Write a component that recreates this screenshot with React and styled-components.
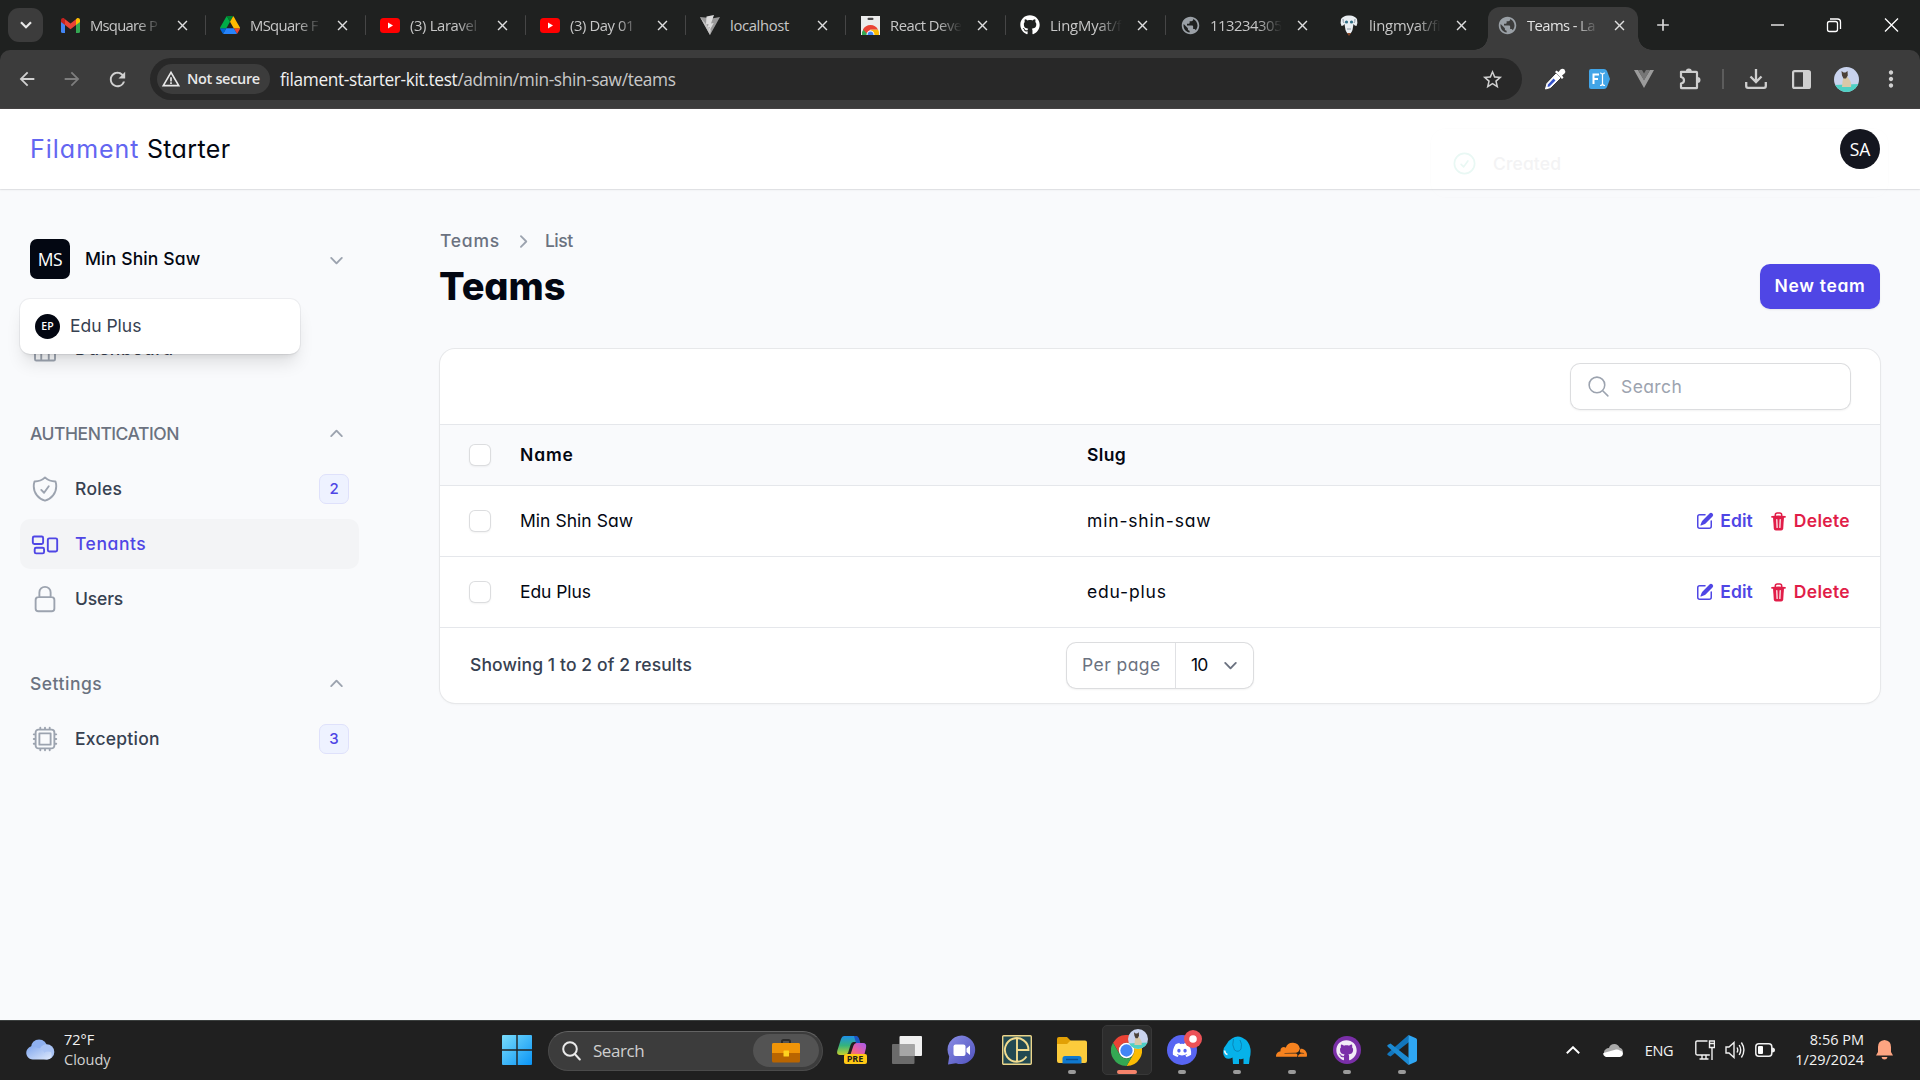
import React from "react";
import styled, { createGlobalStyle, css } from "styled-components";
import {
  HiOutlineShieldCheck,
  HiOutlineRectangleGroup,
  HiOutlineLockClosed,
  HiOutlineCpuChip,
  HiOutlineMagnifyingGlass,
  HiOutlineCheckCircle,
  HiMiniChevronDown,
  HiMiniChevronUp,
  HiMiniChevronRight,
  HiMiniPencilSquare,
} from "react-icons/hi2";
import { FaGithub, FaDiscord, FaCloudflare } from "react-icons/fa6";
import {
  MdArrowBack,
  MdArrowForward,
  MdRefresh,
  MdStarBorder,
  MdWarningAmber,
  MdMoreVert,
  MdAdd,
  MdClose,
  MdPublic,
} from "react-icons/md";

const GlobalStyle = createGlobalStyle`
  *, *::before, *::after { box-sizing: border-box; }
  body { margin: 0; background: #f9fafb; overflow: hidden; }
  svg { display: block; flex: none; }
`;

const systemFont = css`
  font-family: "Open Sans", "Noto Sans", sans-serif;
`;

const appFont = css`
  font-family: "Inter", "Open Sans", sans-serif;
  font-feature-settings: "cv11";
`;

const spaced = css`
  white-space: nowrap;
  letter-spacing: ${(p) => p.$ls || 0}px;
`;

const label = css`
  ${spaced}
  padding-bottom: 2px;
  font-size: 17.5px;
`;

const Screen = styled.div`
  display: flex;
  flex-direction: column;
  width: 1920px;
  height: 1080px;
  overflow: hidden;
`;

/* ---------- browser window ---------- */

const TabStrip = styled.div`
  ${systemFont}
  display: flex;
  align-items: stretch;
  height: 50px;
  flex: none;
  padding-left: 8px;
  background: #1f2120;
`;

const TabSearch = styled.button`
  display: grid;
  place-items: center;
  width: 35px;
  height: 34px;
  margin: 8px 3px 0 0;
  padding: 0;
  border: 0;
  border-radius: 11px;
  background: #3c3c3c;
`;

const Tab = styled.div`
  display: flex;
  align-items: center;
  width: ${(p) => p.$width}px;
  padding: 0 0 0 14px;
`;

const TabIcon = styled.span`
  display: grid;
  place-items: center;
  width: 20px;
  height: 20px;
  margin-right: 10px;
  flex: none;
`;

const TabTitle = styled.span`
  ${spaced}
  width: 72px;
  margin-right: 12px;
  overflow: hidden;
  flex: none;
  font-size: 14.8px;
  line-height: 22px;
  color: ${(p) => (p.$active ? "#e3e3e3" : "#c7c7c7")};
  mask-image: linear-gradient(90deg, #000 66%, transparent 100%);
  ${(p) => p.$solid && "mask-image: none;"}
`;

const TabClose = styled(MdClose)`
  width: 17px;
  height: 17px;
  margin-right: 14px;
  color: #dedede;
`;

const TabDivider = styled.i`
  width: 2px;
  height: 20px;
  border-radius: 1px;
  background: ${(p) => (p.$hidden ? "transparent" : "#464646")};
`;

const ActiveTab = styled.div`
  position: relative;
  display: flex;
  align-items: center;
  width: 150px;
  height: 43px;
  margin: 7px 0 0 4px;
  padding: 0 0 7px 9px;
  border-radius: 12px 12px 0 0;
  background: #3c3c3c;
  &::before,
  &::after {
    content: "";
    position: absolute;
    bottom: 0;
    width: 14px;
    height: 14px;
  }
  &::before {
    left: -14px;
    background: radial-gradient(circle at 0 0, transparent 13.5px, #3c3c3c 14px);
  }
  &::after {
    right: -14px;
    background: radial-gradient(circle at 100% 0, transparent 13.5px, #3c3c3c 14px);
  }
`;

const NewTab = styled(MdAdd)`
  width: 20px;
  height: 20px;
  margin: 15px 0 0 15px;
  color: #d9d9d9;
`;

const WindowControls = styled.div`
  display: flex;
  align-items: center;
  margin-left: auto;
  svg {
    width: 57px;
  }
`;

const ToolbarBack = styled.div`
  flex: none;
  background: #1f2120;
`;

const Toolbar = styled.div`
  ${systemFont}
  display: flex;
  align-items: center;
  height: 59px;
  padding-left: 16px;
  border-radius: 10px 10px 0 0;
  border-bottom: 1px solid #4a4747;
  background: #3c3c3c;
  color: #d0d0d0;
`;

const NavButtons = styled.div`
  display: flex;
  gap: 23px;
  width: 134px;
`;

const Omnibox = styled.div`
  display: flex;
  align-items: center;
  width: 1372px;
  height: 42px;
  padding: 0 18px 0 7px;
  border-radius: 21px;
  background: #282828;
`;

const SecurityChip = styled.div`
  ${spaced}
  display: flex;
  align-items: center;
  gap: 6px;
  width: 113px;
  height: 30px;
  margin-right: 10px;
  padding: 0 0 1px 4px;
  border-radius: 15px;
  background: #3c3c3c;
  font-size: 14.5px;
  font-weight: 600;
  color: #e8e8e8;
`;

const Url = styled.span`
  ${spaced}
  flex: 1;
  font-size: 17.3px;
  color: #c9c9c9;
  b {
    font-weight: 400;
    color: #f0f0f0;
  }
`;

const Extensions = styled.div`
  display: grid;
  grid-template-columns: 45px 44px 45px 47px 19px 47px 44px 46px 44px;
  align-items: center;
  justify-items: center;
  padding-left: 10px;
`;

const BarDivider = styled.i`
  width: 2px;
  height: 20px;
  background: #5c5c5c;
`;

/* ---------- application ---------- */

const AppHeader = styled.header`
  ${appFont}
  position: relative;
  display: flex;
  align-items: center;
  justify-content: space-between;
  height: 80px;
  flex: none;
  padding: 0 40px 0 30px;
  background: #fff;
  box-shadow: 0 0 0 1px rgba(3, 7, 18, 0.05), 0 1px 2px rgba(0, 0, 0, 0.07);
`;

const Brand = styled.h1`
  margin: 0;
  font-size: 25px;
  font-weight: 400;
  white-space: nowrap;
  letter-spacing: 0.36px;
  color: #030712;
  span {
    letter-spacing: 0.99px;
    color: #6366f1;
  }
`;

const UserAvatar = styled.div`
  ${systemFont}
  ${spaced}
  display: grid;
  place-items: center;
  width: 40px;
  height: 40px;
  padding-bottom: 1px;
  border-radius: 50%;
  background: #14161f;
  color: #fff;
  font-size: 17.5px;
`;

const Toast = styled.div`
  position: absolute;
  top: 19px;
  right: 31px;
  display: flex;
  align-items: flex-start;
  gap: 15px;
  width: 459px;
  height: 70px;
  padding: 21px 20px;
  border-radius: 15px;
  border: 1px solid rgba(3, 7, 18, 0.006);
  z-index: 2;
  svg {
    width: 27px;
    height: 27px;
    color: #e9f8f4;
  }
`;

const ToastTitle = styled.span`
  ${spaced}
  font-size: 17.5px;
  font-weight: 500;
  line-height: 27px;
  color: #f3f3f4;
`;

const Body = styled.div`
  ${appFont}
  display: flex;
  flex: 1;
  min-height: 0;
  background: #f9fafc;
`;

const Sidebar = styled.aside`
  position: relative;
  width: 400px;
  padding: 50px 41px 0 20px;
`;

const TenantSwitcher = styled.button`
  display: flex;
  align-items: center;
  width: 100%;
  height: 40px;
  margin-bottom: 45px;
  padding: 0 10px;
  border: 0;
  background: none;
  font: inherit;
  font-feature-settings: inherit;
`;

const TenantLogo = styled.span`
  ${systemFont}
  ${spaced}
  display: grid;
  place-items: center;
  width: 40px;
  height: 40px;
  margin-right: 15px;
  padding-bottom: 1px;
  border-radius: 7px;
  background: #030712;
  color: #fff;
  font-size: 17.5px;
`;

const TenantName = styled.span`
  ${label}
  flex: 1;
  text-align: left;
  font-weight: 500;
  color: #030712;
`;

const Chevron = styled.span`
  color: #9ca3af;
  svg {
    width: 25px;
    height: 25px;
  }
`;

const TenantMenu = styled.div`
  position: absolute;
  top: 110px;
  left: 20px;
  z-index: 1;
  display: flex;
  align-items: center;
  width: 280px;
  height: 55px;
  padding-left: 15px;
  border-radius: 10px;
  background: #fff;
  box-shadow: 0 0 0 1px rgba(3, 7, 18, 0.05), 0 12px 18px -4px rgba(0, 0, 0, 0.12),
    0 5px 7px -5px rgba(0, 0, 0, 0.12);
`;

const MenuAvatar = styled.span`
  ${systemFont}
  display: grid;
  place-items: center;
  width: 25px;
  height: 25px;
  margin-right: 10px;
  padding-bottom: 1px;
  border-radius: 50%;
  background: #030712;
  color: #fff;
  font-size: 10.5px;
  font-weight: 600;
`;

const MenuLabel = styled.span`
  ${label}
  color: #374151;
`;

const NavGroup = styled.section`
  display: flex;
  flex-direction: column;
  gap: 5px;
  margin-bottom: 35px;
`;

const GroupHeader = styled.div`
  display: flex;
  align-items: center;
  justify-content: space-between;
  height: 50px;
  padding: 0 10px;
`;

const GroupTitle = styled.span`
  ${label}
  font-weight: 500;
  color: #6b7280;
`;

const NavItem = styled.a`
  display: flex;
  align-items: center;
  height: 50px;
  padding: 0 10px;
  border-radius: 10px;
  background: ${(p) => (p.$active ? "#f3f4f6" : "transparent")};
  color: ${(p) => (p.$active ? "#4f46e5" : "#374151")};
  > svg {
    width: 30px;
    height: 30px;
    margin-right: 15px;
    color: ${(p) => (p.$active ? "#4f46e5" : "#9ca3af")};
  }
`;

const NavLabel = styled.span`
  ${label}
  flex: 1;
  font-weight: 500;
`;

const Badge = styled.span`
  display: grid;
  place-items: center;
  width: 30px;
  height: 30px;
  padding-bottom: 1px;
  border-radius: 7px;
  border: 1px solid #dfe1fb;
  background: #eef2ff;
  font-size: 15px;
  font-weight: 500;
  color: #4f46e5;
`;

const Main = styled.main`
  flex: 1;
  padding: 40px 40px 0;
`;

const Breadcrumbs = styled.nav`
  display: flex;
  align-items: center;
  height: 25px;
  color: #9ca3af;
  svg {
    width: 25px;
    height: 25px;
    margin: 0 10px;
  }
`;

const Crumb = styled.span`
  ${label}
  font-weight: 500;
  color: #6b7280;
`;

const PageHeader = styled.div`
  display: flex;
  align-items: center;
  justify-content: space-between;
  height: 45px;
  margin: 10px 0 40px;
`;

const PageTitle = styled.h2`
  ${spaced}
  margin: 0 0 1px -1px;
  font-size: 38px;
  font-weight: 800;
  line-height: 45px;
  color: #030712;
`;

const PrimaryButton = styled.button`
  ${label}
  width: 120px;
  height: 45px;
  padding: 0 0 2px;
  border: 0;
  border-radius: 10px;
  background: #4f46e5;
  box-shadow: 0 1px 2px rgba(0, 0, 0, 0.08);
  font-family: inherit;
  font-feature-settings: inherit;
  font-weight: 600;
  color: #fff;
`;

const Card = styled.section`
  overflow: hidden;
  border-radius: 15px;
  background: #fff;
  box-shadow: 0 0 0 1px #e7e8ea, 0 1px 3px rgba(0, 0, 0, 0.06);
`;

const CardToolbar = styled.div`
  display: flex;
  align-items: center;
  justify-content: flex-end;
  height: 75px;
  padding-right: 30px;
`;

const SearchField = styled.label`
  display: flex;
  align-items: center;
  gap: 10px;
  width: 279px;
  height: 45px;
  padding-left: 15px;
  border-radius: 9px;
  background: #fff;
  box-shadow: 0 0 0 1px #dcdddf, 0 1px 2px 1px rgba(0, 0, 0, 0.05);
  color: #9ca3af;
  svg {
    width: 25px;
    height: 25px;
  }
`;

const SearchText = styled.span`
  ${spaced}
  font-size: 17.5px;
`;

const TableRow = styled.div`
  display: grid;
  grid-template-columns: 80px 567px 1fr auto;
  align-items: center;
  height: ${(p) => (p.$head ? 61 : 71)}px;
  padding-right: 30px;
  border-top: 1px solid #e5e7eb;
  background: ${(p) => (p.$head ? "#f9fafc" : "#fff")};
`;

const Checkbox = styled.span`
  width: 20px;
  height: 20px;
  margin-left: 30px;
  border-radius: 5px;
  background: #fff;
  box-shadow: 0 0 0 1px #dcdddf, 0 1px 2px 1px rgba(0, 0, 0, 0.05);
`;

const HeadCell = styled.span`
  ${label}
  font-weight: 600;
  color: #030712;
`;

const Cell = styled.span`
  ${label}
  color: #030712;
`;

const RowActions = styled.div`
  display: flex;
  gap: 18px;
`;

const Action = styled.a`
  display: flex;
  align-items: center;
  gap: ${(p) => (p.$danger ? 8 : 5)}px;
  color: ${(p) => (p.$danger ? "#e11d48" : "#4f46e5")};
`;

const ActionLabel = styled.span`
  ${label}
  font-weight: 600;
`;

const CardFooter = styled.footer`
  display: grid;
  grid-template-columns: 1fr auto 1fr;
  align-items: center;
  height: 76px;
  padding: 0 30px;
  border-top: 1px solid #e5e7eb;
`;

const ResultCount = styled.span`
  ${label}
  font-weight: 500;
  color: #374151;
`;

const PerPage = styled.div`
  display: flex;
  align-items: center;
  width: 186px;
  height: 45px;
  border-radius: 9px;
  box-shadow: 0 0 0 1px #dcdddf, 0 1px 2px 1px rgba(0, 0, 0, 0.05);
`;

const PerPageLabel = styled.span`
  ${spaced}
  display: flex;
  align-items: center;
  width: 109px;
  height: 100%;
  padding: 0 0 2px 15px;
  border-right: 1px solid #e0e1e4;
  font-size: 17.5px;
  color: #6b7280;
`;

const PerPageValue = styled.span`
  display: flex;
  align-items: center;
  justify-content: space-between;
  flex: 1;
  padding: 0 10px 2px 15px;
  font-size: 17.5px;
  letter-spacing: -0.8px;
  color: #030712;
  svg {
    color: #6b7280;
  }
`;

/* ---------- taskbar ---------- */

const Taskbar = styled.footer`
  ${systemFont}
  display: grid;
  grid-template-columns: 489px 1fr auto;
  align-items: center;
  height: 60px;
  flex: none;
  border-top: 1px solid #3b3f3e;
  background: #202020;
  color: #f2f2f2;
`;

const Weather = styled.div`
  display: flex;
  align-items: center;
  gap: 9px;
  padding: 0 0 2px 25px;
`;

const TwoLines = styled.div`
  ${spaced}
  display: flex;
  flex-direction: column;
  align-items: ${(p) => (p.$end ? "flex-end" : "flex-start")};
  font-size: 14.5px;
  line-height: 20px;
  span {
    color: ${(p) => (p.$end ? "#f2f2f2" : "#d2d2d2")};
  }
`;

const Apps = styled.div`
  display: flex;
  align-items: center;
  height: 100%;
`;

const AppSlot = styled.div`
  position: relative;
  display: grid;
  place-items: center;
  width: 55px;
  height: 100%;
  padding-bottom: 1px;
`;

const ActiveTile = styled.div`
  position: relative;
  display: grid;
  place-items: center;
  width: 50px;
  height: 50px;
  border-radius: 5px;
  border: 1px solid #383838;
  background: #2d2d2d;
`;

const Running = styled.i`
  position: absolute;
  bottom: 6px;
  left: 50%;
  width: ${(p) => (p.$active ? 20 : 8)}px;
  height: 4px;
  border-radius: 2px;
  transform: translateX(-50%);
  background: ${(p) => (p.$active ? "#f5836b" : "#9a9a9a")};
`;

const CornerBadge = styled.span`
  position: absolute;
  top: ${(p) => p.$top}px;
  right: ${(p) => p.$right}px;
`;

const TaskSearch = styled.div`
  display: flex;
  align-items: center;
  width: 275px;
  height: 40px;
  margin: 0 1px 0 4px;
  padding: 0 3px 0 13px;
  border-radius: 20px;
  border: 1px solid #4b4b4b;
  border-top-color: #636363;
  background: #3c3c3c;
`;

const TaskSearchText = styled.span`
  ${spaced}
  flex: 1;
  margin-left: 12px;
  font-size: 17px;
  color: #cfcfcf;
`;

const SearchHighlight = styled.span`
  display: grid;
  place-items: center;
  width: 66px;
  height: 33px;
  border-radius: 17px;
  background: #535353;
`;

const Tray = styled.div`
  display: flex;
  align-items: center;
  padding: 0 27px 1px 0;
`;

const TrayText = styled.span`
  ${spaced}
  margin: 0 22px 0 22px;
  font-size: 14.5px;
`;

const TrayStatus = styled.div`
  display: flex;
  align-items: center;
  gap: 10px;
  margin-right: 20px;
`;

/* ---------- drawings ---------- */

const Gmail = () => (
  <svg width="19" height="15" viewBox="0 0 19 15">
    <path d="M0 2v11.5A1.5 1.5 0 0 0 1.5 15H4V5z" fill="#4285f4" />
    <path d="M19 2v11.5a1.5 1.5 0 0 1-1.5 1.5H15V5z" fill="#34a853" />
    <path d="M15 1.2V7l4-3V2c0-1.7-2-2.600-3.300-1.500z" fill="#fbbc04" />
    <path d="M4 1.2V7L0 4V2C0 .3 2-.6 3.300.5z" fill="#c5221f" />
    <path d="M4 7V1.200L9.500 5.400 15 1.200V7l-5.500 4.200z" fill="#ea4335" />
  </svg>
);

const Drive = () => (
  <svg width="20" height="18" viewBox="0 0 87 78">
    <path d="M6.600 66.850l3.850 6.650c.8 1.400 1.950 2.500 3.300 3.300L27.500 53H0c0 1.550.4 3.100 1.200 4.500z" fill="#0066da" />
    <path d="M43.650 25L29.900 1.200c-1.350.8-2.500 1.900-3.300 3.300L1.200 48.500A9 9 0 0 0 0 53h27.500z" fill="#00ac47" />
    <path d="M73.550 76.800c1.350-.8 2.500-1.900 3.300-3.300l9.250-16c.8-1.400 1.200-2.950 1.200-4.500H59.800l5.850 11.500z" fill="#ea4335" />
    <path d="M43.650 25L57.400 1.200C56.050.4 54.500 0 52.900 0H34.400c-1.600 0-3.150.45-4.500 1.200z" fill="#00832d" />
    <path d="M59.800 53H27.500L13.750 76.800c1.350.8 2.900 1.200 4.500 1.200h50.800c1.600 0 3.150-.45 4.500-1.200z" fill="#2684fc" />
    <path d="M73.400 26.500L60.700 4.500c-.8-1.400-1.950-2.500-3.300-3.300L43.650 25 59.800 53h27.450c0-1.550-.4-3.100-1.200-4.500z" fill="#ffba00" />
  </svg>
);

const YouTube = () => (
  <svg width="20" height="15" viewBox="0 0 20 15">
    <rect width="20" height="15" rx="3.500" fill="#f00" />
    <path d="M8 4.500v6l5-3z" fill="#fff" />
  </svg>
);

const Vite = () => (
  <svg width="20" height="20" viewBox="0 0 20 20">
    <path d="M0 2l10 18L20 2l-7 1.200z" fill="#9a9a9a" />
    <path d="M0 2l10 18 1-5z" fill="#c4c4c4" />
    <path d="M14 0L6.500 1.500 6 9.500l2.500-.5-.8 3.600 2-.6-1 5 5-9-2.700.4z" fill="#dcdcdc" />
  </svg>
);

const WebStore = () => (
  <svg width="19" height="19" viewBox="0 0 19 19">
    <path d="M0 0h19v19H0z" fill="#ececec" />
    <rect x="6.500" y="1.800" width="6" height="2.200" rx="1.100" fill="#444" />
    <path d="M1 19a8.500 8.500 0 0 1 2-6.500l4 6.500z" fill="#34a853" />
    <path d="M18 19a8.500 8.500 0 0 0-1-5.500H9.500V19z" fill="#fbbc04" />
    <path d="M2 13.500a8.500 8.500 0 0 1 15 0H9.500L6 17.500z" fill="#ea4335" />
    <path d="M5.500 19a4 4.500 0 0 1 8 0z" fill="#fff" />
    <path d="M6.500 19a3 3.500 0 0 1 6 0z" fill="#4285f4" />
  </svg>
);

const Goat = () => (
  <svg width="18" height="21" viewBox="0 0 18 21">
    <path d="M1 4Q0 8 1.500 11q2 0 3-2l1 6q1.500 4 3.500 4t3.500-4l1-6q1 2 3 2Q18 8 17 4 14 0 9 .5 4 0 1 4z" fill="#e9eef2" />
    <path d="M3 4q0 3 1 4M15 4q0 3-1 4M7 14h4" stroke="#8b98a5" fill="none" />
    <circle cx="6.500" cy="7" r="1.600" fill="#2f6f86" />
    <circle cx="11.500" cy="7" r="1.600" fill="#2f6f86" />
    <path d="M7 18h4l-2 3z" fill="#8a4a2b" />
  </svg>
);

const Globe = () => <MdPublic size={21} color="#9aa0a6" />;

const ToolbarGlyphs = {
  Eyedropper: () => (
    <svg width="22" height="22" viewBox="0 0 22 22">
      <path d="M12 6l4 4-9.500 9.500L1.500 21 3 15.500z" fill="#fff" stroke="#fff" strokeLinejoin="round" />
      <path d="M9.500 10.500l2 2-6 6-2 .5.500-2.500z" fill="#3553c9" />
      <path d="M11 4l1.500-1.500 2 1.500 2-2.500Q18.500 0 20.500 1.500q1.500 2 0 4L18 7.500l1.500 2L18 11z" fill="#fff" />
    </svg>
  ),
  Fonts: () => (
    <svg width="21" height="20" viewBox="0 0 21 20">
      <path d="M2 0h13q2 0 3 2l3 8-3 8q-1 2-3 2H2q-2 0-2-2V2Q0 0 2 0z" fill="#42a5e8" />
      <path d="M4.500 15V5.500H10M4.500 10H9" stroke="#fff" strokeWidth="2" fill="none" />
      <path d="M11 4q2.500 0 2.500 2v8.500q0 2-2.500 2M16 4q-2.500 0-2.500 2v8.500q0 2 2.500 2" stroke="#fff" strokeWidth="1.200" fill="none" />
    </svg>
  ),
  Vue: () => (
    <svg width="20" height="18" viewBox="0 0 20 18">
      <path d="M0 0h4l6 10 6-10h4L10 18z" fill="#9c9c9c" />
      <path d="M4 0h4l2 3.500L12 0h4l-6 10.500z" fill="#767676" />
    </svg>
  ),
  Puzzle: () => (
    <svg width="22" height="22" viewBox="0 0 22 22">
      <path
        d="M2 3.800h15.200q.8 0 .8.800v14.800q0 .8-.8.800H2.800q-.8 0-.8-.8V15.500q3-.5 3-3.200T2 9z"
        fill="none"
        stroke="#cfcfcf"
        strokeWidth="2.200"
        strokeLinejoin="round"
      />
      <path d="M6.800 3.500a3 3 0 0 1 6 0zM18.500 9a3 3 0 0 1 0 6z" fill="#cfcfcf" />
    </svg>
  ),
  Download: () => (
    <svg width="22" height="20" viewBox="0 0 22 20" fill="none" stroke="#cfcfcf" strokeWidth="2.300">
      <path d="M11 0v13M5.500 7.500L11 13l5.500-5.500M1.200 13v4q0 1.800 1.800 1.800h16q1.800 0 1.800-1.800v-4" />
    </svg>
  ),
  SidePanel: () => (
    <svg width="19" height="19" viewBox="0 0 19 19">
      <rect x="1.100" y="1.100" width="16.800" height="16.800" rx="1.500" fill="none" stroke="#cfcfcf" strokeWidth="2.200" />
      <path d="M11 1h7v17h-7z" fill="#cfcfcf" />
    </svg>
  ),
};

const CatAvatar = ({ size }) => (
  <svg width={size} height={size} viewBox="0 0 25 25">
    <clipPath id={`cat${size}`}>
      <circle cx="12.500" cy="12.500" r="12.500" />
    </clipPath>
    <g clipPath={`url(#cat${size})`}>
      <path d="M0 0h25v25H0z" fill="#c9d3ee" />
      <path d="M0 18l25-1v8H0z" fill="#4fd0c4" />
      <path d="M10 9q3-1 5 3 3 4 2 8H8q0-6 2-11z" fill="#d8c8a8" />
      <path d="M7.500 4l2 1.500h2l2-1.500.3 4.500-1.800 3h-2.500L8 8.500z" fill="#4b4038" />
    </g>
  </svg>
);

const Chrome = () => (
  <svg width="31" height="31" viewBox="0 0 48 48">
    <path d="M3.200 12a24 24 0 0 1 41.600 0H24a12 12 0 0 0-10.400 18z" fill="#ea4335" />
    <path d="M44.800 12A24 24 0 0 1 24 48l10.400-18A12 12 0 0 0 24 12z" fill="#fbbc04" />
    <path d="M24 48A24 24 0 0 1 3.200 12l10.400 18a12 12 0 0 0 20.800 0z" fill="#34a853" />
    <circle cx="24" cy="24" r="12" fill="#fff" />
    <circle cx="24" cy="24" r="9.500" fill="#4285f4" />
  </svg>
);

const DashboardIcon = () => (
  <svg viewBox="0 0 24 24" fill="none" stroke="currentColor" strokeWidth="1.500" strokeLinecap="round" strokeLinejoin="round">
    <path d="M4 8v12.200q0 1 1 1h14q1 0 1-1V8M9 9v12M15 9v12M4 8l8-4 8 4" />
  </svg>
);

const TrashIcon = () => (
  <svg width="15" height="19" viewBox="0 0 15 19" fill="none" stroke="currentColor" strokeLinecap="round">
    <path d="M4.300 4V3q0-2 2-2h2.400q2 0 2 2v1" strokeWidth="1.500" />
    <path d="M1 4.800q6.500-1 13 0" strokeWidth="1.700" />
    <path d="M2 5h11l-.8 11.800q-.2 1.700-2 1.700H4.800q-1.800 0-2-1.700z" fill="currentColor" stroke="none" />
    <path d="M5.800 7.500l.3 8M9.200 7.500l-.3 8" stroke="#fff" strokeWidth="1.200" />
  </svg>
);

const CloudWeather = () => (
  <svg width="30" height="21" viewBox="0 0 31 22">
    <defs>
      <linearGradient id="cw" x1="0" y1="0" x2="1" y2="1">
        <stop offset="0" stopColor="#7fa6ee" />
        <stop offset="1" stopColor="#dfe9fb" />
      </linearGradient>
    </defs>
    <circle cx="14.500" cy="9" r="8.500" fill="#8fb1f0" />
    <circle cx="22.500" cy="13.500" r="8" fill="#a9c3f4" />
    <path d="M8 21.500a7 7 0 1 1 5-12q5 0 7 5 2-2 7-1 2.500 7-4 8z" fill="url(#cw)" />
  </svg>
);

const WindowsLogo = () => (
  <svg width="30" height="30" viewBox="0 0 30 30">
    <defs>
      <linearGradient id="win" x1="0" y1="0" x2="1" y2="1">
        <stop offset="0" stopColor="#79dcfb" />
        <stop offset="1" stopColor="#0a94f5" />
      </linearGradient>
    </defs>
    <path d="M0 1q0-1 1-1h13.300v14.300H0zM15.700 0H29q1 0 1 1v13.300H15.700zM0 15.700h14.300V30H1q-1 0-1-1zM15.700 15.700H30V29q0 1-1 1H15.700z" fill="url(#win)" />
  </svg>
);

const Briefcase = () => (
  <svg width="28" height="24" viewBox="0 0 28 24">
    <path d="M10 4V2.500Q10 1 11.500 1h5Q18 1 18 2.500V4" fill="none" stroke="#2b2b2b" strokeWidth="2" />
    <rect y="4" width="28" height="19.500" rx="1.500" fill="#b96500" />
    <path d="M0 5.500Q0 4 1.500 4h25Q28 4 28 5.500V14H0z" fill="#f09508" />
    <rect x="11.500" y="11.500" width="5.500" height="6" rx=".5" fill="#ffd21f" />
  </svg>
);

const CopilotMark = styled.span`
  position: relative;
  display: block;
`;

const PreTag = styled.span`
  position: absolute;
  right: 0;
  bottom: 0;
  width: 23px;
  height: 10px;
  border-radius: 2px;
  background: #ffc815;
  text-align: center;
  font-size: 9px;
  font-weight: 700;
  line-height: 10px;
  color: #1c1c1c;
`;

const Copilot = () => (
  <CopilotMark>
    <svg width="30" height="28" viewBox="0 0 30 28">
      <defs>
        <linearGradient id="cp1" x1="0" y1="0" x2="0" y2="1">
          <stop offset="0" stopColor="#1d8fe8" />
          <stop offset=".5" stopColor="#35b37c" />
          <stop offset="1" stopColor="#c6d02c" />
        </linearGradient>
        <linearGradient id="cp2" x1="1" y1="0" x2="0" y2="1">
          <stop offset="0" stopColor="#a45bf0" />
          <stop offset=".6" stopColor="#ec5f9b" />
          <stop offset="1" stopColor="#f78a3c" />
        </linearGradient>
      </defs>
      <path d="M7 0h11q3 0 4 4l.5 2h-6q-2 0-3 3l-2.500 8Q10 19 7 19H3q-4 0-2.500-5L4 3q1-3 3-3z" fill="url(#cp1)" />
      <path d="M17 0h2q2.500 0 3.500 4l.8 3H19z" fill="#1b56c4" />
      <path d="M20 7h6q4 0 3 5l-2 8H13l3-9q1-4 4-4z" fill="url(#cp2)" />
    </svg>
    <PreTag>PRE</PreTag>
  </CopilotMark>
);

const TaskView = () => (
  <svg width="30" height="28" viewBox="0 0 30 28">
    <rect x="7.500" width="22.500" height="20" rx="1" fill="#f0f0f0" />
    <rect y="8" width="22.500" height="20" rx="1" fill="#6b6b6b" />
    <path d="M7.500 8h15v12h-15z" fill="#a6a6a6" />
  </svg>
);

const ChatApp = () => (
  <svg width="30" height="30" viewBox="0 0 30 30">
    <defs>
      <linearGradient id="ch" x1="0" y1="0" x2="1" y2="1">
        <stop offset="0" stopColor="#8a8ee6" />
        <stop offset="1" stopColor="#4f51bd" />
      </linearGradient>
    </defs>
    <path d="M15 .5A14.300 14.300 0 1 1 9 28.200L1 29.500l1.200-8A14.300 14.300 0 0 1 15 .5z" fill="url(#ch)" />
    <rect x="6.500" y="9.500" width="12" height="11.500" rx="2" fill="#fff" />
    <path d="M19.500 13.500L23 10.500V20l-3.500-3z" fill="#fff" />
  </svg>
);

const EmblemApp = () => (
  <svg width="30" height="30" viewBox="0 0 30 30">
    <rect x=".7" y=".7" width="28.600" height="28.600" rx="1" fill="#234a52" stroke="#ecd58a" strokeWidth="1.400" />
    <path d="M24.500 21.500A11.800 11.800 0 1 1 26.500 15H15M15 3.500v23" fill="none" stroke="#f2dc8f" strokeWidth="1.900" />
  </svg>
);

const Folder = () => (
  <svg width="30" height="27" viewBox="0 0 30 27">
    <path d="M0 2q0-2 2-2h8l4 4-3 5H0z" fill="#e2a005" />
    <path d="M0 7h10l3.500-3.500H28q2 0 2 2V24q0 2-2 2H2q-2 0-2-2z" fill="#fccb3c" />
    <path d="M5.500 26.500v-5q0-2.500 2.500-2.500h14q2.500 0 2.500 2.500v5z" fill="#1079cf" />
    <path d="M9 22.500h12" stroke="#0a4f93" strokeWidth="1.400" />
  </svg>
);

const DiscordApp = styled.span`
  display: grid;
  place-items: center;
  width: 30px;
  height: 30px;
  border-radius: 50%;
  background: #5865f2;
  color: #fff;
`;

const GithubApp = styled.span`
  display: grid;
  place-items: center;
  width: 28px;
  height: 28px;
  border-radius: 50%;
  background: #7a2fa8;
  color: #f2ecf7;
`;

const RecordingDot = () => (
  <svg width="18" height="18" viewBox="0 0 18 18">
    <circle cx="9" cy="9" r="9" fill="#ec5257" />
    <circle cx="9" cy="9" r="3.800" fill="#fff" />
  </svg>
);

const Elephant = () => (
  <svg width="28" height="29" viewBox="0 0 28 29">
    <path
      d="M9 2.500Q14-1 19 1.500 26.500 5 27.500 13q.5 5-.8 9l-.7 6h-5.500v-5.500q-2 1-4.500.5V28h-6l-.5-6.500Q5 24 2 21.500-.5 19 .3 15 .5 11.500 3 9q2-4.500 6-6.500z"
      fill="#06b2ea"
    />
    <path d="M10.500 3Q8.500 9 11.500 14q4 3 6.500-1 1.500-5-1-9" fill="none" stroke="#0a86b8" strokeWidth="1" />
    <path d="M1.500 14.500q.5 3.500 3 4" stroke="#e8f7fd" strokeWidth="1.700" fill="none" />
  </svg>
);

const VSCode = () => (
  <svg width="30" height="30" viewBox="0 0 30 30">
    <path d="M22 7L3.500 21.500 1 20.300Q-.5 19.300 1 18L21.500 0z" fill="#1276bd" />
    <path d="M22 23L3.500 8.500 1 9.700Q-.5 10.700 1 12L21.500 30z" fill="#1b8ad3" />
    <path d="M21.500 0L29 3.300q1 .5 1 1.700v20q0 1.200-1 1.700L21.500 30z" fill="#2fa7f4" />
  </svg>
);

const TrayCaret = () => (
  <svg width="14" height="8" viewBox="0 0 14 8" fill="none" stroke="#fff" strokeWidth="1.900">
    <path d="M.8 7.200L7 1.200l6.200 6" />
  </svg>
);

const OneDrive = styled.svg`
  margin-left: 23px;
`;

const Bell = styled.svg`
  margin-left: 12px;
`;

const TABS = [
  { icon: <Gmail />, title: "Msquare P", ls: -0.75 },
  { icon: <Drive />, title: "MSquare F", ls: -0.65 },
  { icon: <YouTube />, title: "(3) Laravel", ls: -0.35 },
  { icon: <YouTube />, title: "(3) Day 01", ls: -0.4 },
  { icon: <Vite />, title: "localhost", ls: -0.35, solid: true },
  { icon: <WebStore />, title: "React Deve", ls: -0.5 },
  { icon: <FaGithub size={20} color="#fff" />, title: "LingMyat/f", ls: -0.15 },
  { icon: <Globe />, title: "113234305", ls: -0.45, width: 159 },
  { icon: <Goat />, title: "lingmyat/fi", ls: -0.15, width: 159 },
];

const TEAMS = [
  { name: "Min Shin Saw", nameLs: 0.03, slug: "min-shin-saw", slugLs: 0.83 },
  { name: "Edu Plus", nameLs: -0.07, slug: "edu-plus", slugLs: 0.84 },
];

const PINNED = [
  { id: "copilot", icon: <Copilot /> },
  { id: "taskview", icon: <TaskView /> },
  { id: "chat", icon: <ChatApp /> },
  { id: "emblem", icon: <EmblemApp /> },
  { id: "files", icon: <Folder />, running: true },
];

function BrowserChrome() {
  return (
    <>
      <TabStrip>
        <TabSearch>
          <svg width="12" height="8" viewBox="0 0 12 8" fill="none" stroke="#e8e8e8" strokeWidth="2.200">
            <path d="M1 1.200l5 5 5-5" />
          </svg>
        </TabSearch>
        {TABS.map((tab, i) => (
          <Tab key={tab.title} $width={tab.width || 160}>
            <TabIcon>{tab.icon}</TabIcon>
            <TabTitle $ls={tab.ls} $solid={tab.solid}>{tab.title}</TabTitle>
            <TabClose />
            <TabDivider $hidden={i === TABS.length - 1} />
          </Tab>
        ))}
        <ActiveTab>
          <TabIcon><Globe /></TabIcon>
          <TabTitle $ls={-0.6} $active>Teams - La</TabTitle>
          <TabClose />
        </ActiveTab>
        <NewTab />
        <WindowControls>
          <svg height="20" viewBox="0 0 57 20" stroke="#fff" strokeWidth="1.300"><path d="M22 10h13" /></svg>
          <svg height="20" viewBox="0 0 57 20" stroke="#fff" strokeWidth="1.300" fill="none">
            <rect x="21.500" y="6.500" width="10" height="10" rx="2" />
            <path d="M24 4h7.500q3 0 3 3v7" />
          </svg>
          <svg height="20" viewBox="0 0 57 20" stroke="#fff" strokeWidth="1.300"><path d="M22 3.500l13 13M35 3.500l-13 13" /></svg>
        </WindowControls>
      </TabStrip>
      <ToolbarBack>
        <Toolbar>
          <NavButtons>
            <MdArrowBack size={22} />
            <MdArrowForward size={22} color="#7d7d7d" />
            <MdRefresh size={23} />
          </NavButtons>
          <Omnibox>
            <SecurityChip $ls={-0.33}>
              <MdWarningAmber size={20} />
              Not secure
            </SecurityChip>
            <Url $ls={-0.35}><b>filament-starter-kit.test</b>/admin/min-shin-saw/teams</Url>
            <MdStarBorder size={23} />
          </Omnibox>
          <Extensions>
            <ToolbarGlyphs.Eyedropper />
            <ToolbarGlyphs.Fonts />
            <ToolbarGlyphs.Vue />
            <ToolbarGlyphs.Puzzle />
            <BarDivider />
            <ToolbarGlyphs.Download />
            <ToolbarGlyphs.SidePanel />
            <CatAvatar size={25} />
            <MdMoreVert size={26} />
          </Extensions>
        </Toolbar>
      </ToolbarBack>
    </>
  );
}

function AppSidebar() {
  return (
    <Sidebar>
      <TenantSwitcher>
        <TenantLogo $ls={-0.5}>MS</TenantLogo>
        <TenantName $ls={0.15}>Min Shin Saw</TenantName>
        <Chevron><HiMiniChevronDown /></Chevron>
      </TenantSwitcher>
      <TenantMenu>
        <MenuAvatar>EP</MenuAvatar>
        <MenuLabel $ls={-0.02}>Edu Plus</MenuLabel>
      </TenantMenu>
      <NavGroup>
        <NavItem>
          <DashboardIcon />
          <NavLabel $ls={0.65}>Dashboard</NavLabel>
        </NavItem>
      </NavGroup>
      <NavGroup>
        <GroupHeader>
          <GroupTitle $ls={-0.48}>AUTHENTICATION</GroupTitle>
          <Chevron><HiMiniChevronUp /></Chevron>
        </GroupHeader>
        <NavItem>
          <HiOutlineShieldCheck />
          <NavLabel $ls={0.3}>Roles</NavLabel>
          <Badge>2</Badge>
        </NavItem>
        <NavItem $active>
          <HiOutlineRectangleGroup />
          <NavLabel $ls={0.55}>Tenants</NavLabel>
        </NavItem>
        <NavItem>
          <HiOutlineLockClosed />
          <NavLabel $ls={-0.15}>Users</NavLabel>
        </NavItem>
      </NavGroup>
      <NavGroup>
        <GroupHeader>
          <GroupTitle $ls={0.5}>Settings</GroupTitle>
          <Chevron><HiMiniChevronUp /></Chevron>
        </GroupHeader>
        <NavItem>
          <HiOutlineCpuChip />
          <NavLabel $ls={0.25}>Exception</NavLabel>
          <Badge>3</Badge>
        </NavItem>
      </NavGroup>
    </Sidebar>
  );
}

function TeamsPage() {
  return (
    <Main>
      <Breadcrumbs>
        <Crumb $ls={0.75}>Teams</Crumb>
        <HiMiniChevronRight />
        <Crumb $ls={-0.48}>List</Crumb>
      </Breadcrumbs>
      <PageHeader>
        <PageTitle $ls={-0.1}>Teams</PageTitle>
        <PrimaryButton $ls={0.7}>New team</PrimaryButton>
      </PageHeader>
      <Card>
        <CardToolbar>
          <SearchField>
            <HiOutlineMagnifyingGlass />
            <SearchText $ls={0.4}>Search</SearchText>
          </SearchField>
        </CardToolbar>
        <TableRow $head>
          <Checkbox />
          <HeadCell $ls={0.87}>Name</HeadCell>
          <HeadCell $ls={0.39}>Slug</HeadCell>
        </TableRow>
        {TEAMS.map((team) => (
          <TableRow key={team.slug}>
            <Checkbox />
            <Cell $ls={team.nameLs}>{team.name}</Cell>
            <Cell $ls={team.slugLs}>{team.slug}</Cell>
            <RowActions>
              <Action><HiMiniPencilSquare size={20} /><ActionLabel $ls={0.06}>Edit</ActionLabel></Action>
              <Action $danger><TrashIcon /><ActionLabel $ls={0.31}>Delete</ActionLabel></Action>
            </RowActions>
          </TableRow>
        ))}
        <CardFooter>
          <ResultCount $ls={0.1}>Showing 1 to 2 of 2 results</ResultCount>
          <PerPage>
            <PerPageLabel $ls={0.44}>Per page</PerPageLabel>
            <PerPageValue>
              10
              <HiMiniChevronDown size={25} />
            </PerPageValue>
          </PerPage>
        </CardFooter>
      </Card>
    </Main>
  );
}

function WindowsTaskbar() {
  return (
    <Taskbar>
      <Weather>
        <CloudWeather />
        <TwoLines>72°F<span>Cloudy</span></TwoLines>
      </Weather>
      <Apps>
        <AppSlot><WindowsLogo /></AppSlot>
        <TaskSearch>
          <svg width="19" height="20" viewBox="0 0 19 20" fill="none" stroke="#eaeaea" strokeWidth="2">
            <circle cx="8" cy="8" r="6.800" />
            <path d="M12.800 13l5 5.500" strokeLinecap="round" />
          </svg>
          <TaskSearchText $ls={-0.45}>Search</TaskSearchText>
          <SearchHighlight><Briefcase /></SearchHighlight>
        </TaskSearch>
        {PINNED.map((app) => (
          <AppSlot key={app.id}>
            {app.icon}
            {app.running && <Running />}
          </AppSlot>
        ))}
        <AppSlot>
          <ActiveTile>
            <Chrome />
            <CornerBadge $top={3} $right={3}><CatAvatar size={20} /></CornerBadge>
          </ActiveTile>
          <Running $active />
        </AppSlot>
        <AppSlot>
          <DiscordApp><FaDiscord size={20} /></DiscordApp>
          <CornerBadge $top={9} $right={7}><RecordingDot /></CornerBadge>
          <Running />
        </AppSlot>
        <AppSlot><Elephant /><Running /></AppSlot>
        <AppSlot><FaCloudflare size={31} color="#f6821f" /><Running /></AppSlot>
        <AppSlot><GithubApp><FaGithub size={21} /></GithubApp><Running /></AppSlot>
        <AppSlot><VSCode /><Running /></AppSlot>
      </Apps>
      <Tray>
        <TrayCaret />
        <OneDrive width="20" height="13" viewBox="0 0 20 13">
          <path d="M3 12a4 4 0 0 1 0-7q1-1 3-1 1-4 5.500-4 3.500 0 5 3.500Q20 4.500 20 8.500z" fill="#a9a9a9" />
          <path d="M2 12.500Q-.5 11 .5 9L13 5.500q2-.5 4 1 3 .5 3 3.500-.3 2.500-3 3H4q-1 0-2-.5z" fill="#fff" />
        </OneDrive>
        <TrayText $ls={-0.3}>ENG</TrayText>
        <TrayStatus>
          <svg width="20" height="20" viewBox="0 0 20 20" fill="none" stroke="#f0f0f0" strokeWidth="1.400">
            <path d="M12.500 1H2.200Q.8 1 .8 2.400v11.200Q.8 15 2.200 15h12.600M4.500 19h9M7 15v4M11 15v4" />
            <path d="M14.500 1h5v6.500h-5zM17 7.500V20M14.500 3.500h5" />
          </svg>
          <svg width="20" height="18" viewBox="0 0 20 18" fill="none" stroke="#f0f0f0" strokeWidth="1.400">
            <path d="M1 6h3l5-4.500v15L4 12H1zM12 6.500q1.500 2.500 0 5M14.200 4q3 5 0 10M16.400 1.500q5 7.500 0 15" />
          </svg>
          <svg width="20" height="14" viewBox="0 0 20 14">
            <rect x=".8" y=".8" width="16" height="12.400" rx="3" fill="none" stroke="#f0f0f0" strokeWidth="1.500" />
            <rect x="3" y="3" width="5" height="8" rx="1" fill="#fff" />
            <path d="M17 4.500q3 0 3 2.500t-3 2.500z" fill="#f0f0f0" />
          </svg>
        </TrayStatus>
        <TwoLines $end>8:56 PM<span>1/29/2024</span></TwoLines>
        <Bell width="17" height="20" viewBox="0 0 17 20">
          <path d="M8.500 0Q15 .5 15 7v5l2 3.500H0L2 12V7Q2 .5 8.500 0z" fill="#fda481" />
          <path d="M5.500 17h6q-.5 2.500-3 2.500t-3-2.500z" fill="#fda481" />
        </Bell>
      </Tray>
    </Taskbar>
  );
}

export default function App() {
  return (
    <Screen>
      <GlobalStyle />
      <BrowserChrome />
      <AppHeader>
        <Brand><span>Filament</span> Starter</Brand>
        <Toast>
          <HiOutlineCheckCircle />
          <ToastTitle $ls={0.12}>Created</ToastTitle>
        </Toast>
        <UserAvatar $ls={-0.1}>SA</UserAvatar>
      </AppHeader>
      <Body>
        <AppSidebar />
        <TeamsPage />
      </Body>
      <WindowsTaskbar />
    </Screen>
  );
}
